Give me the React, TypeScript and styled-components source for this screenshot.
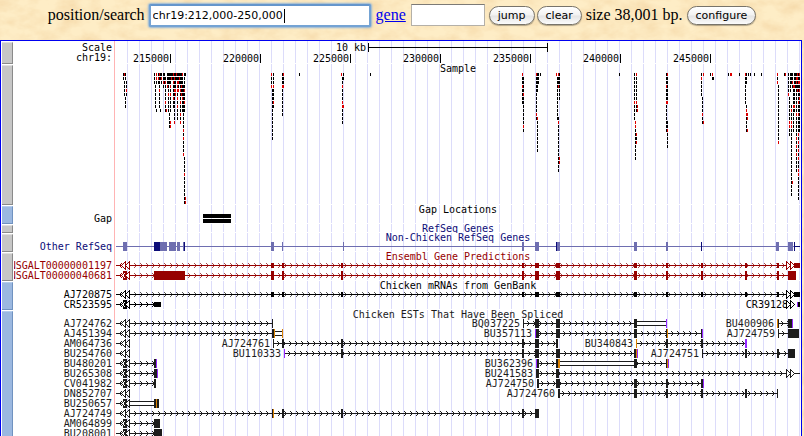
import React from "react";
import styled, { createGlobalStyle } from "styled-components";

const EST = "#1c1c1c";
const ENSEMBL = "#960000";
const NAVY = "#0c0c78";
const SLATE = "#6e6eb0";
const ORANGE = "#dc8200";
const PURPLE = "#9628ff";

const GlobalStyle = createGlobalStyle`
  html { scrollbar-width: none; background: #feedc6; }
  body { margin: 0; }
`;

const Page = styled.div`
  position: relative;
  isolation: isolate;
  min-height: 100vh;
`;

const Paper = styled.svg`
  position: absolute;
  inset: 0;
  z-index: -1;
  width: 100%;
  height: 100%;
`;

const Toolbar = styled.form`
  display: flex;
  align-items: center;
  justify-content: center;
  gap: 4px;
  height: 30px;
  padding-bottom: 10px;
  font: 16px/20px "Liberation Serif", serif;
  color: #000;
  white-space: nowrap;
`;

const SearchField = styled.span`
  position: relative;
  display: flex;
`;

const TextBox = styled.input<{ $focused?: boolean }>`
  box-sizing: border-box;
  width: ${(p) => (p.$focused ? 222 : 74)}px;
  height: ${(p) => (p.$focused ? 23 : 22)}px;
  padding: 0 2px;
  border: ${(p) => (p.$focused ? "2px solid #74a3d4" : "1px solid #b4b0a8")};
  border-top-color: ${(p) => (p.$focused ? "#6596cc" : "#7c7a76")};
  border-radius: ${(p) => (p.$focused ? 2 : 0)}px;
  box-shadow: ${(p) => (p.$focused ? "0 0 2px 1px #8fb4d8" : "none")};
  background: #fff;
  font: 11px "DejaVu Sans", sans-serif;
  color: #000;
  outline: none;
`;

const Caret = styled.span`
  position: absolute;
  left: 135px;
  top: 5px;
  width: 1px;
  height: 14px;
  background: #000;
`;

const GeneLink = styled.a`
  margin: 0 1px;
  color: #0000ee;
`;

const ButtonPair = styled.span`
  display: flex;
  gap: 2px;
`;

const PillButton = styled.button`
  height: 19px;
  padding: 0 8px;
  border: 1px solid #77736a;
  border-radius: 10px;
  background: linear-gradient(#fff 0%, #f2f2f2 48%, #e4e4e4 52%, #fbfbfb 100%);
  box-shadow: 0 1px 1px rgba(0, 0, 0, 0.3);
  font: 11px/15px "DejaVu Sans", sans-serif;
  color: #000;
`;

const Panel = styled.main`
  margin-right: 2px;
  padding-left: 1px;
  border: 1px solid #0000f0;
  background: #fff;
  font: 10px/10px "DejaVu Sans Mono", monospace;
`;

const TrackRow = styled.section<{ $color: string }>`
  display: grid;
  grid-template-columns: 11px 101px 1fr;
  color: ${(p) => p.$color};
`;

const Handle = styled.button<{ $blue?: boolean }>`
  margin: 1px 0 0;
  padding: 0;
  border: 1px solid;
  border-width: 1px 1px 1px 0;
  border-color: ${(p) => (p.$blue ? "#b4ccec #7092c0 #7092c0" : "#dedede #8a8a8a #8a8a8a")};
  background: ${(p) => (p.$blue ? "#9bb8e0" : "#c6c6c6")};
`;

const Labels = styled.div<{ $top: number }>`
  display: flex;
  flex-direction: column;
  align-items: flex-end;
  margin-left: 1px;
  padding: ${(p) => p.$top}px 2px 0 0;
  overflow: hidden;
  white-space: nowrap;
`;

const Plot = styled.div`
  min-width: 0;
  overflow: hidden;
  border-left: 1px solid #ffb4b4;
  background: repeating-linear-gradient(to right, transparent 0 11px, #dcdcfa 11px 12px) 1px 0 / 100% calc(100% - 1px) no-repeat;
`;

const Title = styled.h2`
  margin: 0;
  height: 9px;
  font: inherit;
  line-height: 9px;
  text-align: center;
  white-space: pre;
`;

const Drawing = styled.svg`
  display: block;
  text {
    font: 10px "DejaVu Sans Mono", monospace;
  }
`;

type TrackProps = {
  name: string;
  color?: string;
  title?: string;
  labels?: string[];
  labelTop?: number;
  height: number;
  blue?: boolean;
  children?: React.ReactNode;
};

function Track({ name, color = "#000", title, labels = [], labelTop = 9, height, blue, children }: TrackProps) {
  return (
    <TrackRow $color={color}>
      <Handle type="button" aria-label={`${name} track settings`} $blue={blue} />
      <Labels $top={labelTop}>
        {labels.map((l) => (
          <span key={l}>{l}</span>
        ))}
      </Labels>
      <Plot>
        {title && <Title>{title}</Title>}
        {height > 0 && (
          <Drawing width={686} height={height} viewBox={`115 0 686 ${height}`} shapeRendering="crispEdges">
            {children}
          </Drawing>
        )}
      </Plot>
    </TrackRow>
  );
}

type Exon = [from: number, to: number, color?: string];

type GeneProps = {
  row?: number;
  color: string;
  exons?: Exon[];
  from?: number;
  to?: number;
  gap?: [number, number];
  thin?: boolean;
  plain?: boolean;
  leftEnd?: boolean;
  leftBox?: boolean;
  rightEnd?: boolean;
  chevron?: string;
  label?: string;
};

function Gene({ row = 0, color, exons = [], from, to, gap, thin, plain, leftEnd, leftBox, rightEnd, chevron, label }: GeneProps) {
  const t = row * 10;
  const start = from ?? (leftEnd ? 130 : exons[0][0]);
  const end = to ?? (exons.length ? exons[exons.length - 1][1] : start);
  const inGap = (x: number) => !!gap && x >= gap[0] - 2 && x < gap[1];
  let arrows = "";
  for (let x = start + 4; x < end - 3; x += 6) {
    if (!inGap(x)) arrows += `M${x} ${t + 2}h1v1h-1zM${x + 1} ${t + 3}h1v3h-1zM${x} ${t + 6}h1v1h-1z`;
  }
  const spans = gap ? [[start, gap[0]], [gap[1], end]] : [[start, end]];
  return (
    <g fill={color}>
      {!plain && <path d={arrows} fill={chevron ?? color} />}
      {spans.map(([a, b]) => b > a && <rect key={a} x={a} y={t + 4} width={b - a} height={1} />)}
      {gap && (
        <>
          <rect x={gap[0]} y={t + 2} width={gap[1] - gap[0]} height={5} />
          <rect x={gap[0]} y={t + 3} width={gap[1] - gap[0]} height={3} fill="#fff" />
        </>
      )}
      {leftEnd && (
        <>
          <rect x={116} y={t + 4} width={6} height={1} />
          <path d={`M121 ${t + 2}h1v1h-1zM120 ${t + 3}h1v3h-1zM121 ${t + 6}h1v1h-1z`} />
          {leftBox && <rect x={123} y={t} width={4} height={9} />}
          <path
            d={`M125.5 ${t + 0.5}L121.5 ${t + 4.5}L125.5 ${t + 8.5}zM129.5 ${t + 0.5}L125.5 ${t + 4.5}L129.5 ${t + 8.5}z`}
            fill="#fff"
            stroke={color}
          />
          {leftBox && <rect x={124} y={t + 3} width={1} height={3} />}
        </>
      )}
      {exons.map(([a, b, c], i) => (
        <rect key={i} x={a} y={thin ? t + 2 : t} width={b - a} height={thin ? 5 : 9} fill={c ?? color} />
      ))}
      {rightEnd && (
        <path
          d={`M786.5 ${t + 0.5}L790.5 ${t + 4.5}L786.5 ${t + 8.5}zM790.5 ${t + 0.5}L794.5 ${t + 4.5}L790.5 ${t + 8.5}z`}
          fill="#fff"
          stroke={color}
        />
      )}
      {label && (
        <text x={start - 3} y={t + 8} textAnchor="end">
          {label}
        </text>
      )}
    </g>
  );
}

/* One stacked column of sample variants: x, first row, last row, rows drawn in red. */
type Column = [x: number, first: number, last: number, red?: number[]];

const COLUMNS: Column[] = [
  [123, 0, 1], [124, 0, 0, [0]], [125, 0, 1], [124, 2, 5], [126, 2, 5, [4]], [125, 6, 8],
  [154, 0, 2], [156, 0, 2, [0, 1]], [155, 3, 8], [156, 9, 9], [158, 0, 2, [1]], [159, 0, 8, [0, 4]], [160, 9, 9],
  [160, 0, 1], [161, 0, 2, [1]], [163, 0, 3, [2]], [164, 0, 2], [165, 1, 9, [2, 7]], [166, 9, 9, [9]],
  [167, 0, 3, [3]], [168, 0, 9, [5]], [169, 0, 2], [169, 10, 13], [170, 0, 9, [3, 5]], [170, 12, 13, [12, 13]], [171, 0, 1, [1]],
  [172, 0, 1], [173, 0, 8, [0, 2, 6]], [174, 0, 12, [1, 4, 12]], [175, 0, 5, [4, 5]], [176, 0, 1, [0]],
  [177, 0, 11, [2, 3, 4, 6, 8]], [178, 0, 4, [2, 4]], [179, 0, 2, [1]], [180, 0, 12, [4, 7, 10, 12]], [181, 0, 5, [3, 5]],
  [182, 0, 9, [0, 6]], [183, 3, 20, [14, 16, 20]], [184, 0, 9, [4, 7]], [185, 0, 0], [184, 21, 32, [25]],
  [185, 31, 32, [31, 32]],
  [271, 0, 3, [0, 3]], [273, 0, 8, [3, 7]], [272, 4, 16],
  [282, 0, 10, [3]], [283, 0, 3, [0, 3]], [299, 0, 0],
  [341, 0, 0, [0]], [343, 0, 1], [342, 1, 12, [3, 7, 8]], [343, 8, 8, [8]], [370, 0, 0],
  [522, 0, 7, [0, 3]], [523, 1, 14, [5, 13]],
  [536, 0, 11, [0, 10]], [537, 0, 4], [540, 0, 0], [538, 0, 2], [537, 11, 19, [11]],
  [556, 0, 0, [0]], [558, 0, 3, [0, 3]], [559, 0, 6], [557, 1, 11], [558, 11, 24, [12]], [559, 21, 22, [21, 22]],
  [619, 0, 0],
  [634, 0, 11, [7]], [636, 0, 9, [0, 7]], [637, 8, 9, [8, 9]], [635, 12, 21, [12, 13]], [636, 15, 17, [15, 17]],
  [666, 0, 14, [3, 7]], [667, 0, 7, [0, 7]], [667, 12, 18, [14]],
  [701, 0, 5, [1]], [703, 0, 0, [0]], [702, 6, 12, [10]], [703, 12, 12, [12]],
  [710, 0, 0], [712, 0, 1, [0]], [713, 1, 1], [728, 0, 0], [730, 0, 0, [0]], [731, 0, 0, [0]], [739, 0, 0],
  [745, 0, 7, [0]], [746, 0, 2], [748, 0, 0], [750, 0, 0], [754, 0, 0], [761, 0, 0], [746, 8, 14, [9, 10]],
  [747, 10, 11, [10, 11]], [747, 14, 14, [14]],
  [777, 0, 2, [0, 2]], [778, 3, 17, [17]], [784, 0, 0], [785, 0, 0, [0]],
  [788, 0, 5, [5]], [789, 6, 15, [12, 13]], [790, 0, 4], [791, 8, 30, [9, 12, 13]], [792, 27, 27, [27]], [791, 0, 2],
  [792, 0, 3, [2]], [793, 3, 14, [3, 8]], [794, 0, 9, [3, 8]], [795, 0, 3], [796, 0, 24, [1, 2, 10, 16, 18, 20]],
  [797, 0, 4, [0, 1, 4]], [798, 0, 31, [2, 7, 10, 15, 17, 19, 21, 24, 25]], [799, 0, 14, [0, 2, 4, 6]],
];

function cells(red: boolean) {
  let d = "";
  for (const [x, first, last, reds = []] of COLUMNS) {
    for (let r = first; r <= last; r++) {
      if (reds.includes(r) === red) d += `M${x} ${r * 4}h1v3h-1z`;
    }
  }
  return d;
}

const SHARED: Exon[] = [[271, 274], [282, 284], [341, 343], [522, 524], [535, 539], [556, 560], [634, 637], [666, 668], [701, 703], [745, 747], [777, 779]];

const EST_GENES: GeneProps[] = [
  { row: 0, color: EST, leftEnd: true, exons: [[272, 273]] },
  { row: 0, color: EST, label: "BQ037225", exons: [[523, 524], [535, 539], [556, 560], [634, 637], [666, 667, PURPLE]], gap: [637, 666] },
  { row: 0, color: EST, label: "BU400906", exons: [[777, 778, ORANGE], [778, 779], [788, 792], [792, 793, PURPLE]] },
  { row: 1, color: EST, leftEnd: true, exons: [[272, 274], [274, 275, ORANGE], [282, 283, ORANGE]], gap: [275, 282] },
  { row: 1, color: EST, label: "BU357113", exons: [[535, 536, PURPLE], [536, 539], [556, 560], [634, 637], [666, 667], [667, 668, ORANGE], [701, 702], [702, 703, PURPLE]] },
  { row: 1, color: EST, label: "AJ724759", exons: [[778, 779], [788, 799]] },
  { row: 2, color: EST, leftEnd: true, to: 130 },
  { row: 2, color: EST, label: "AJ724761", exons: [[273, 274], [282, 284], [341, 343], [522, 524], [535, 539], [556, 558]] },
  { row: 2, color: EST, label: "BU340843", exons: [[636, 637, ORANGE], [666, 668], [701, 703], [745, 747, PURPLE]] },
  { row: 3, color: EST, leftEnd: true, to: 130 },
  { row: 3, color: EST, label: "BU110333", exons: [[284, 285, PURPLE], [341, 343], [522, 524], [535, 539], [556, 560], [634, 636], [636, 637, ORANGE], [637, 638, PURPLE]] },
  { row: 3, color: EST, label: "AJ724751", exons: [[702, 703], [745, 747], [777, 779], [788, 795]] },
  { row: 4, color: EST, leftEnd: true, leftBox: true, exons: [[154, 156], [156, 157, PURPLE]] },
  { row: 4, color: EST, label: "BU362396", exons: [[536, 537, PURPLE], [537, 539], [556, 558], [558, 560, ORANGE], [634, 637], [666, 667], [667, 668, ORANGE], [668, 669, PURPLE]], gap: [560, 634] },
  { row: 5, color: EST, leftEnd: true, leftBox: true, exons: [[154, 157], [157, 158, PURPLE]] },
  { row: 5, color: EST, label: "BU241583", exons: [[536, 539], [556, 559]], to: 800, rightEnd: true },
  { row: 6, color: EST, leftEnd: true, leftBox: true, exons: [[154, 156]] },
  { row: 6, color: EST, label: "AJ724750", exons: [[537, 539], [556, 560], [634, 637], [666, 668], [701, 703], [703, 704, PURPLE]] },
  { row: 7, color: EST, leftEnd: true, to: 130 },
  { row: 7, color: EST, label: "AJ724760", exons: [[558, 560], [634, 637], [666, 668], [701, 703], [745, 747], [777, 778]] },
  { row: 8, color: EST, leftEnd: true, leftBox: true, exons: [[154, 156], [156, 157, ORANGE], [157, 159]], gap: [130, 154] },
  { row: 9, color: EST, leftEnd: true, exons: [[272, 273], [273, 274, ORANGE], [282, 284], [341, 343], [522, 524], [535, 539]] },
  { row: 10, color: EST, leftEnd: true, leftBox: true, exons: [[154, 160]] },
  { row: 11, color: EST, leftEnd: true, leftBox: true, exons: [[154, 162]] },
];

const REFSEQ: Exon[] = [
  [123, 127], [154, 160, NAVY], [160, 167], [169, 176], [177, 180], [183, 184], [184, 185, NAVY], [271, 274], [282, 283],
  [343, 344], [522, 524], [535, 539], [556, 557, NAVY], [557, 560], [634, 637], [666, 668], [701, 702, NAVY], [776, 779],
  [788, 793], [794, 795, NAVY],
];

const TICKS = [215000, 220000, 225000, 230000, 235000, 240000, 245000];

export default function App() {
  return (
    <Page>
      <GlobalStyle />
      <Paper aria-hidden="true">
        <filter id="grain" x="0" y="0" width="100%" height="100%" colorInterpolationFilters="sRGB">
          <feTurbulence type="fractalNoise" baseFrequency="0.05 0.08" numOctaves="4" seed="4" />
          <feColorMatrix values="0 0 0 0 0.93  0 0 0 0 0.78  0 0 0 0 0.56  0.8 0 0 0 -0.28" />
        </filter>
        <rect width="100%" height="100%" filter="url(#grain)" />
      </Paper>
      <Toolbar onSubmit={(e) => e.preventDefault()}>
        <label htmlFor="position">position/search</label>
        <SearchField>
          <TextBox id="position" $focused defaultValue="chr19:212,000-250,000" />
          <Caret />
        </SearchField>
        <GeneLink href="#gene" id="gene-label">gene</GeneLink>
        <TextBox aria-labelledby="gene-label" />
        <ButtonPair>
          <PillButton type="submit">jump</PillButton>
          <PillButton type="reset">clear</PillButton>
        </ButtonPair>
        <span>size 38,001 bp.</span>
        <PillButton type="button">configure</PillButton>
      </Toolbar>
      <Panel>
        <Track name="Base position" labels={["Scale", "chr19:"]} labelTop={2} height={23}>
          <text x={366} y={10} textAnchor="end">10 kb</text>
          <path d="M368 2h1v9h-1zM547 2h1v9h-1zM368 6h180v1h-180z" />
          {TICKS.map((t, i) => (
            <g key={t}>
              <text x={169 + i * 90} y={21} textAnchor="end">{t}</text>
              <rect x={170 + i * 90} y={13} width={1} height={9} />
            </g>
          ))}
        </Track>
        <Track name="Sample" title="Sample" height={132}>
          <path d={cells(false)} />
          <path d={cells(true)} fill="#dc0000" />
        </Track>
        <Track name="Gap" title="Gap Locations" labels={["Gap"]} height={10} blue>
          <path d="M203 0h28v4h-28zM203 5h28v4h-28z" />
        </Track>
        <Track name="RefSeq Genes" title="RefSeq Genes" color={NAVY} height={0} />
        <Track name="Other RefSeq" title="Non-Chicken RefSeq Genes" labels={["Other RefSeq"]} color={NAVY} height={10}>
          <Gene color={SLATE} plain from={116} to={800} exons={REFSEQ} />
          <rect x={794} y={4} width={6} height={1} fill={NAVY} />
        </Track>
        <Track name="Ensembl" title="Ensembl Gene Predictions" labels={["ENSGALT00000001197", "ENSGALT00000040681"]} color={ENSEMBL} height={20}>
          <Gene color={ENSEMBL} chevron="#a84848" leftEnd rightEnd thin exons={[...SHARED, [794, 800]]} />
          <Gene row={1} color={ENSEMBL} chevron="#a84848" leftEnd leftBox exons={[[154, 185], ...SHARED, [788, 796]]} />
        </Track>
        <Track name="Chicken mRNAs" title="Chicken mRNAs from GenBank" labels={["AJ720875", "CR523595"]} height={20} blue>
          <Gene color="#000" chevron="#555" leftEnd rightEnd thin exons={[...SHARED, [794, 800]]} />
          <Gene row={1} color="#000" leftEnd leftBox thin exons={[[154, 161]]} />
          <text x={788} y={18} textAnchor="end">CR39128</text>
          <Gene row={1} color="#000" thin plain rightEnd exons={[[797, 798, PURPLE], [798, 800]]} />
        </Track>
        <Track
          name="Chicken ESTs"
          title="Chicken ESTs That Have Been Spliced"
          labels={["AJ724762", "AJ451394", "AM064736", "BU254760", "BU480201", "BU265308", "CV041982", "DN852707", "BU250657", "AJ724749", "AM064899", "BU208001"]}
          color={EST}
          height={120}
          blue
        >
          {EST_GENES.map((g, i) => (
            <Gene key={i} {...g} />
          ))}
        </Track>
      </Panel>
    </Page>
  );
}
